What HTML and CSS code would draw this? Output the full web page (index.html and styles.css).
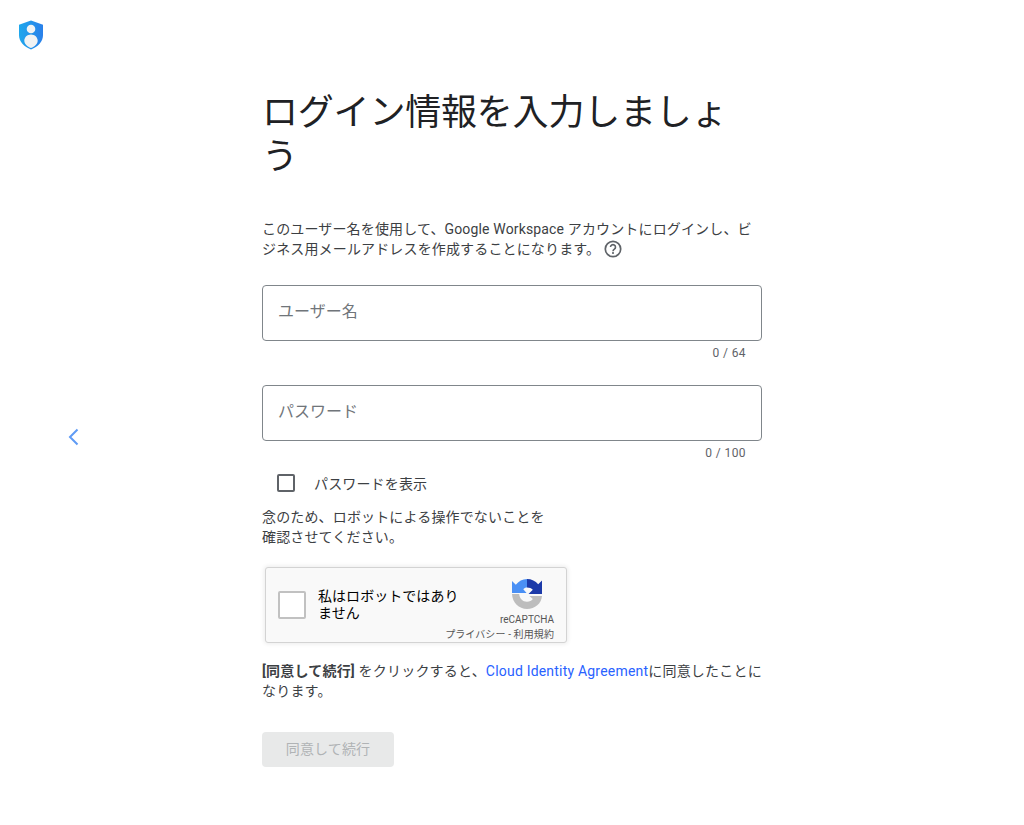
FILE: index.html

```html
<!DOCTYPE html>
<html lang="ja">
<head>
  <title>ログイン情報を入力しましょう</title>
  <meta charset="utf-8">
  <meta name="viewport" content="width=device-width, initial-scale=1">
  <link rel="stylesheet" href="styles.css">
</head>
<body>
  <div class="page">
    <aside class="side">
      <svg class="logo" width="26" height="30" viewBox="0 0 26 30">
        <defs>
          <linearGradient id="shield" x1="0" y1="0" x2="1" y2="0">
            <stop offset="0" stop-color="#1ea7ec"/>
            <stop offset="1" stop-color="#2a80ea"/>
          </linearGradient>
        </defs>
        <path d="M13 .5 25 4.7V15c0 6.6-5 11.600-12 14.500C6 26.600 1 21.600 1 15V4.700z" fill="url(#shield)"/>
        <circle cx="13" cy="9" r="4.300" fill="#f1f3f4"/>
        <path d="M13 14.500c3.800 0 6.700 2.900 6.700 6.300 0 2.900-3 6-6.700 7.200-3.700-1.200-6.700-4.300-6.700-7.200 0-3.400 2.900-6.300 6.700-6.300z" fill="#f1f3f4"/>
      </svg>
      <a class="back" href="#">
        <svg width="12" height="18" viewBox="0 0 12 18"><path d="M10.500 1.500 3 9l7.500 7.500" fill="none" stroke="#5f9bf5" stroke-width="2"/></svg>
      </a>
    </aside>

    <main class="form">
      <h1>ログイン情報を入力しましょう</h1>
      <p class="intro">このユーザー名を使用して、Google Workspace アカウントにログインし、ビジネス用メールアドレスを作成することになります。<svg class="help" width="20" height="20" viewBox="0 0 20 20">
          <circle cx="10" cy="10" r="7.700" fill="none" stroke="#5f6368" stroke-width="1.700"/>
          <path d="M7.500 8.100a2.500 2.500 0 1 1 3.900 2.100c-.9.600-1.400 1-1.400 2" fill="none" stroke="#5f6368" stroke-width="1.600"/>
          <rect x="9.100" y="13.100" width="1.800" height="1.800" fill="#5f6368"/>
        </svg>
      </p>

      <div class="field">
        <input class="text-input" type="text" placeholder="ユーザー名">
        <div class="count">0 / 64</div>
      </div>
      <div class="field">
        <input class="text-input" type="password" placeholder="パスワード">
        <div class="count">0 / 100</div>
      </div>

      <label class="show-pass"><span class="box"></span>パスワードを表示</label>

      <p class="robot-note">念のため、ロボットによる操作でないことを<br>確認させてください。</p>

      <div class="captcha">
        <span class="captcha-box"></span>
        <span class="captcha-label">私はロボットではありません</span>
        <div class="captcha-brand">
          <svg width="32" height="32" viewBox="0 0 32 32">
            <path d="M16 1v8.500c-1.500 0-2.800.6-3.700 1.700l3.300 3.800H1V3l3.800 3.800C7.500 3.300 11.500 1 16 1z" fill="#4a90f5"/>
            <path d="M16 1c4.500 0 8.500 2 11.200 5.300L31 2.500V16H17.500l4.300-4.300c-1.300-1.400-3.500-2.200-5.800-2.200z" fill="#1c3aa9"/>
            <path d="M1 16h7.200c.3 4.500 3.500 7.700 7.800 7.700 2.500 0 4.500-1 5.800-2.800L18.500 18H31c-.6 7.500-7 13-15 13S1.300 24.500 1 16z" fill="#bdbdbd"/>
          </svg>
          <span class="brand-name">reCAPTCHA</span>
          <span class="brand-links">プライバシー - 利用規約</span>
        </div>
      </div>

      <p class="agree"><b>[同意して続行]</b> をクリックすると、<a href="#">Cloud Identity Agreement</a>に同意したことになります。</p>

      <button class="submit" disabled>同意して続行</button>
    </main>
  </div>
</body>
</html>
```

FILE: styles.css

```css
* { box-sizing: border-box; }
body { margin: 0; background: #fff; color: #3c4043; font-family: Roboto, "Noto Sans CJK JP", sans-serif; font-size: 14px; }
.page { display: flex; min-height: 825px; }

.side { width: 262px; padding: 20px 0 0 18px; display: flex; flex-direction: column; }
.logo { display: block; }
.back { display: block; margin: 378px 0 0 49px; width: 12px; height: 18px; }

.form { width: 500px; padding-top: 91px; }
h1 { margin: 0 0 40px; font-size: 36px; font-weight: 400; line-height: 44px; letter-spacing: -.2px; color: #202124; }
.intro { margin: 0 0 25px; line-height: 20px; letter-spacing: .15px; }
.help { vertical-align: middle; margin-left: 3px; position: relative; top: -1px; }

.field { margin-bottom: 13px; }
.text-input { display: block; width: 100%; height: 56px; padding: 0 15px 3px; border: 1px solid #80868b; border-radius: 4px; font: inherit; font-size: 16px; outline: none; }
.text-input::placeholder { color: #70757a; opacity: 1; }
.count { padding: 4px 16px 0; height: 31px; text-align: right; font-size: 12px; line-height: 16px; letter-spacing: .4px; color: #5f6368; }

.show-pass { display: flex; align-items: center; height: 24px; padding-left: 15px; margin-top: -14px; letter-spacing: .15px; }
.box { width: 18px; height: 18px; margin-right: 19px; border: 2px solid #5f6368; border-radius: 2px; }

.robot-note { margin: 12px 0 20px; line-height: 20px; letter-spacing: .15px; }

.captcha { display: flex; align-items: center; position: relative; width: 302px; height: 76px; margin-left: 3px; background: #f9f9f9; border: 1px solid #d3d3d3; border-radius: 3px; box-shadow: 0 0 4px 1px rgba(0,0,0,.08); }
.captcha-box { flex: none; width: 28px; height: 28px; margin-left: 12px; background: #fff; border: 2px solid #c1c1c1; border-radius: 2px; }
.captcha-label { width: 150px; margin-left: 12px; font-size: 14px; line-height: 17px; color: #000; letter-spacing: .05px; }
.captcha-brand { position: absolute; right: 12px; top: 10px; display: flex; flex-direction: column; align-items: flex-end; }
.captcha-brand svg { margin-right: 11px; }
.brand-name { margin-top: 3px; font-size: 10px; line-height: 14px; color: #555; }
.brand-links { margin-top: 1px; font-size: 10px; line-height: 14px; letter-spacing: .1px; color: #555; }

.agree { margin: 18px 0 0; line-height: 20px; letter-spacing: .2px; }
.agree b { font-weight: 700; }
.agree a { color: #2962ff; text-decoration: none; }

.submit { display: block; width: 132px; height: 35px; margin-top: 31px; padding: 0 0 3px; border: 0; border-radius: 4px; background: #e8e9e9; color: #b0b3b5; font: inherit; letter-spacing: .15px; }
```
